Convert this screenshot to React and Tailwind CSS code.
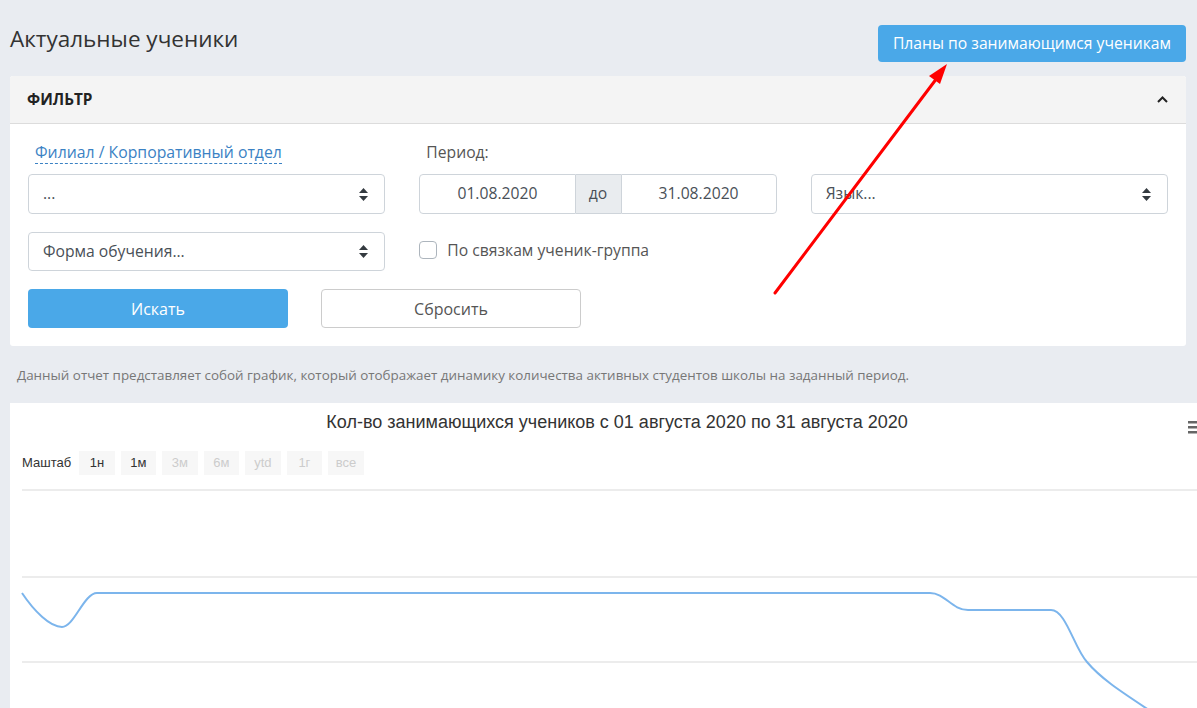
import React from 'react';

const SelectArrows = () => (
  <svg width="9" height="13" viewBox="0 0 9 13" className="shrink-0">
    <path d="M4.5 0 L9 5 L0 5 Z" fill="#343a40" />
    <path d="M4.5 13 L9 8 L0 8 Z" fill="#343a40" />
  </svg>
);

const FakeSelect = ({ text, className = '' }) => (
  <div className={`flex items-center justify-between h-full border border-[#ced4da] rounded-[4px] bg-white pl-[14px] pr-[16px] ${className}`}>
    <span className="text-[15.7px] text-[#495057]">{text}</span>
    <SelectArrows />
  </div>
);

const ranges = [
  { label: '1н', active: true },
  { label: '1м', active: true },
  { label: '3м', active: false },
  { label: '6м', active: false },
  { label: 'ytd', active: false },
  { label: '1г', active: false },
  { label: 'все', active: false },
];

const App = () => {
  return (
    <div
      className="relative min-h-screen bg-[#e9ecf1] overflow-hidden pl-[10px]"
      style={{ fontFamily: '"Open Sans", "Noto Sans", sans-serif' }}
    >
      <div className="w-[1176px]">
        {/* Header */}
        <div className="flex items-start justify-between pt-[25px]">
          <h1 className="text-[22.5px] leading-[28px] text-[#333] font-normal">Актуальные ученики</h1>
          <button className="h-[37px] px-[15px] rounded-[4px] bg-[#4aa8e8] text-white text-[15.7px]">
            Планы по занимающимся ученикам
          </button>
        </div>

        {/* Filter */}
        <div className="mt-[14px] bg-white rounded-[3px] overflow-hidden">
          <div className="h-[48px] bg-[#f4f4f4] border-b border-[#dcdcdc] flex items-center justify-between pl-[17px] pr-[18px]">
            <span className="text-[15.3px] font-bold text-[#222]">ФИЛЬТР</span>
            <svg width="11" height="7" viewBox="0 0 11 7">
              <polyline points="1,6 5.5,1.5 10,6" fill="none" stroke="#222" strokeWidth="2" />
            </svg>
          </div>
          <div className="px-[18px] pt-[16px] pb-[18px]">
            <div className="grid grid-cols-3 gap-x-[34px] h-[24px] mb-[10px]">
              <div className="pl-[7px]">
                <span className="text-[15.8px] leading-[24px] text-[#3b82c4] border-b border-dashed border-[#3b82c4]">
                  Филиал / Корпоративный отдел
                </span>
              </div>
              <div className="pl-[7px] text-[15.7px] leading-[24px] text-[#555]">Период:</div>
              <div />
            </div>
            <div className="grid grid-cols-3 gap-x-[34px] h-[40px] mb-[18px]">
              <FakeSelect text="..." />
              <div className="flex h-full text-[15.7px] text-[#495057]">
                <div className="flex-1 flex items-center justify-center border border-[#ced4da] rounded-l-[4px]">01.08.2020</div>
                <div className="w-[45px] flex items-center justify-center bg-[#e9ecef] border-y border-[#ced4da]">до</div>
                <div className="flex-1 flex items-center justify-center border border-[#ced4da] rounded-r-[4px]">31.08.2020</div>
              </div>
              <FakeSelect text="Язык..." />
            </div>
            <div className="grid grid-cols-3 gap-x-[34px] h-[39px] mb-[18px]">
              <FakeSelect text="Форма обучения..." />
              <div className="flex items-start gap-[10px] pt-[8px]">
                <div className="mt-[1px] w-[18px] h-[18px] rounded-[4px] border border-[#adb5bd] bg-white" />
                <span className="text-[15.7px] leading-[20px] text-[#555]">По связкам ученик-группа</span>
              </div>
              <div />
            </div>
            <div className="flex gap-[33px] h-[39px]">
              <button className="w-[260px] h-full rounded-[4px] bg-[#4aa8e8] text-white text-[16px]">Искать</button>
              <button className="w-[260px] h-full rounded-[4px] border border-[#ccc] bg-white text-[#555] text-[16px]">Сбросить</button>
            </div>
          </div>
        </div>

        <p className="pl-[7px] mt-[19px] text-[13.4px] leading-[20px] text-[#777]">
          Данный отчет представляет собой график, который отображает динамику количества активных студентов школы на заданный период.
        </p>
      </div>

      {/* Chart */}
      <div
        className="relative mt-[18px] w-[1214px] bg-white pt-[8px]"
        style={{ fontFamily: '"Liberation Sans", Arial, sans-serif' }}
      >
        <div className="text-center text-[18px] leading-[22px] text-[#333]">
          Кол-во занимающихся учеников с 01 августа 2020 по 31 августа 2020
        </div>
        <svg className="absolute left-[1178px] top-[17px]" width="14" height="14" viewBox="0 0 14 14">
          <rect x="0" y="1" width="14" height="2.5" fill="#666" />
          <rect x="0" y="6" width="14" height="2.5" fill="#666" />
          <rect x="0" y="11" width="14" height="2.5" fill="#666" />
        </svg>
        <div className="flex items-center mt-[18px] pl-[12px] h-[24px]">
          <span className="text-[13px] text-[#333] mr-[8px]">Маштаб</span>
          <div className="flex gap-[6px]">
            {ranges.map((r) => (
              <div
                key={r.label}
                className={`w-[35.5px] h-[24px] flex items-center justify-center bg-[#f7f7f7] text-[13px] ${r.active ? 'text-[#333]' : 'text-[#ccc]'}`}
              >
                {r.label}
              </div>
            ))}
          </div>
        </div>
        <svg className="block mt-[5px]" width="1214" height="240" viewBox="0 0 1214 240">
          <line x1="12" y1="10" x2="1214" y2="10" stroke="#e6e6e6" strokeWidth="1.5" />
          <line x1="12" y1="97" x2="1214" y2="97" stroke="#e6e6e6" strokeWidth="1.5" />
          <line x1="12" y1="182" x2="1214" y2="182" stroke="#e6e6e6" strokeWidth="1.5" />
          <path
            d="M12,113 C24,131 40,147 52,147 C64,147 74,113 87,113 L920,113 C935,113 942,130 958,130 L1041,130 C1056,130 1064,168 1077,182 C1092,200 1115,214 1148,236"
            fill="none"
            stroke="#7cb5ec"
            strokeWidth="2"
          />
        </svg>
      </div>

      {/* Annotation arrow */}
      <svg className="absolute left-0 top-0 pointer-events-none" width="1197" height="708">
        <line x1="775" y1="293" x2="937" y2="78" stroke="#ff0000" strokeWidth="3" strokeLinecap="round" />
        <polygon points="947,64 940,84 929,76" fill="#ff0000" />
      </svg>
    </div>
  );
};

export default App;
